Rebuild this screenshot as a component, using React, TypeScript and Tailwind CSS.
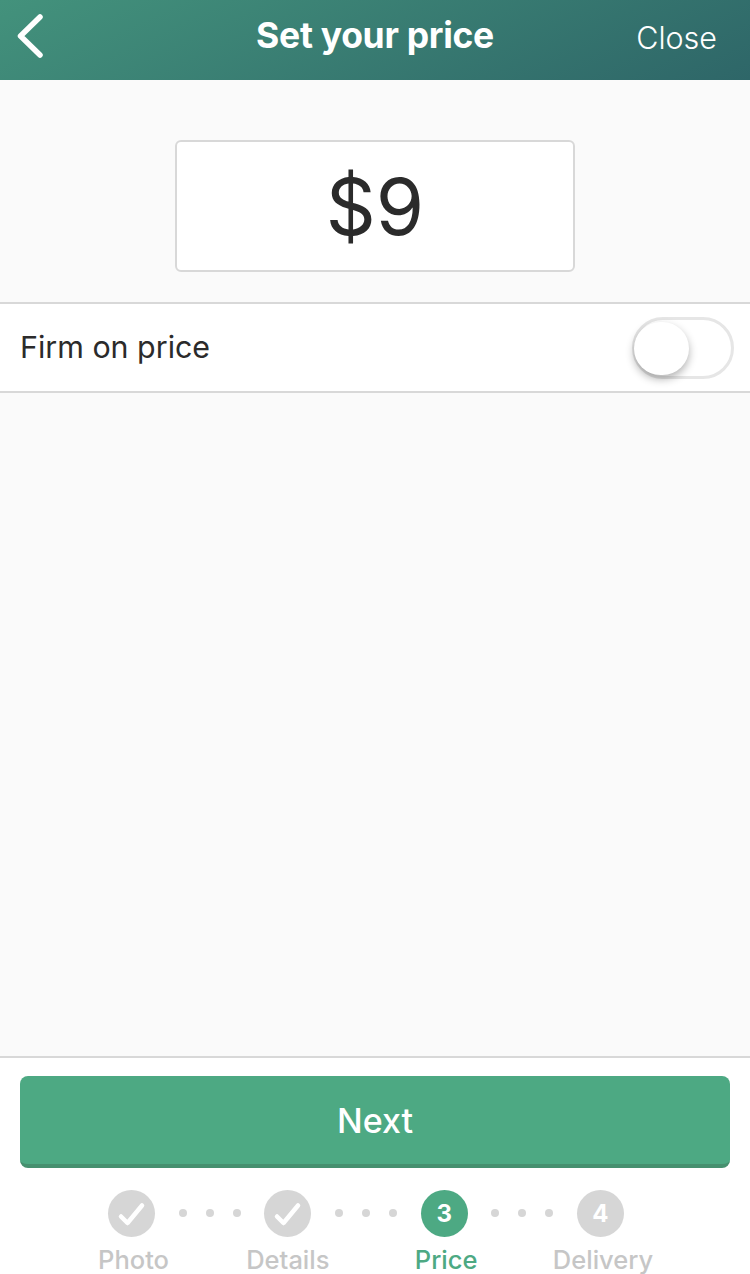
import React from 'react';

const steps = [
  { label: 'Photo', done: true, labelClass: 'ml-[4px]' },
  { label: 'Details', done: true, labelClass: '' },
  { label: 'Price', number: 3, active: true, labelClass: 'ml-[4px]' },
  { label: 'Delivery', number: 4, labelClass: 'ml-[5px]' },
];

const Dots = () => (
  <div className="flex h-[47px] flex-1 items-center justify-center gap-[19px] pb-[1px]">
    <span className="h-2 w-2 rounded-full bg-[#d6d6d6]" />
    <span className="h-2 w-2 rounded-full bg-[#d6d6d6]" />
    <span className="h-2 w-2 rounded-full bg-[#d6d6d6]" />
  </div>
);

const CheckMark = () => (
  <svg width="47" height="47" viewBox="0 0 47 47" fill="none">
    <path d="M13 26.5 L19.5 33 L34 15.5" stroke="white" strokeWidth="4.5" strokeLinecap="round" strokeLinejoin="round" />
  </svg>
);

const Stepper = () => (
  <div className="flex pl-[108px] pr-[126px] pt-[22px]">
    {steps.map((step, index) => (
      <React.Fragment key={step.label}>
        <div className="flex w-[47px] flex-col items-center">
          <div
            className={
              step.active
                ? 'flex h-[47px] w-[47px] items-center justify-center rounded-full bg-[#4da983] text-[24px] font-bold text-white'
                : 'flex h-[47px] w-[47px] items-center justify-center rounded-full bg-[#d6d6d6] text-[24px] font-bold text-white'
            }
          >
            {step.done ? <CheckMark /> : step.number}
          </div>
          <span
            className={
              (step.active
                ? 'mt-[10px] whitespace-nowrap text-[25.5px] leading-[26px] font-medium text-[#4da983] '
                : 'mt-[10px] whitespace-nowrap text-[25.5px] leading-[26px] font-medium text-[#c6c6c6] ') + step.labelClass
            }
          >
            {step.label}
          </span>
        </div>
        {index < steps.length - 1 && <Dots />}
      </React.Fragment>
    ))}
  </div>
);

export default function App() {
  return (
    <div className="flex h-[1274px] w-[750px] flex-col overflow-hidden bg-[#fafafa] font-['Inter',sans-serif] text-[#2b2b2b]">
      <header className="flex h-20 items-center bg-[linear-gradient(155deg,#43927c,#2e6668)] px-[16px] text-white">
        <div className="flex-1">
          <svg width="30" height="44" viewBox="0 0 30 44" fill="none" className="mb-[8px]">
            <path d="M24 3 L4.5 22 L24 41" stroke="white" strokeWidth="5.5" strokeLinecap="round" strokeLinejoin="round" />
          </svg>
        </div>
        <h1 className="mb-[8px] text-[35.5px] font-bold tracking-[-0.3px]">Set your price</h1>
        <div className="flex flex-1 justify-end">
          <button className="mr-[17px] mb-[4px] text-[30.5px] font-light">Close</button>
        </div>
      </header>

      <main className="flex-1">
        <div className="flex justify-center pt-[60px] pb-[30px]">
          <div className="flex h-[132px] w-[400px] items-center justify-center rounded-[6px] border-2 border-[#d8d8d8] bg-white text-[78px] font-normal">
            $9
          </div>
        </div>
        <div className="flex h-[91px] items-center justify-between border-y-2 border-[#d8d8d8] bg-white pl-[20px] pr-[16px]">
          <span className="text-[30.4px]">Firm on price</span>
          <div className="relative h-[62px] w-[102px] rounded-full border-[3px] border-[#e6e6e6] bg-white">
            <div className="absolute -left-[1px] top-[2px] h-[53px] w-[55px] rounded-full bg-white shadow-[0_4px_9px_rgba(0,0,0,0.3)]" />
          </div>
        </div>
      </main>

      <footer className="h-[218px] border-t-2 border-[#d8d8d8] bg-white">
        <div className="px-5 pt-[18px]">
          <button className="h-[92px] w-full rounded-[8px] border-b-[4px] border-[#46906f] bg-[#4da983] text-[34px] font-medium text-white">
            Next
          </button>
        </div>
        <Stepper />
      </footer>
    </div>
  );
}
